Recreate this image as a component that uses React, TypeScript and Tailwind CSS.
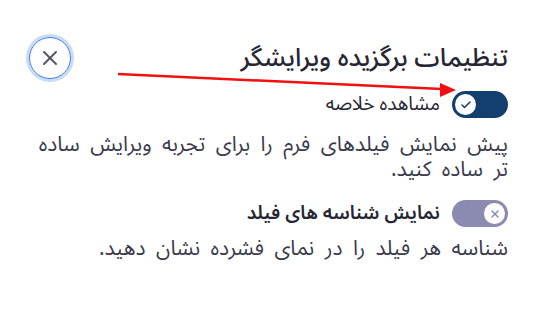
import { Check, X } from "lucide-react";

function Toggle({ on }: { on: boolean }) {
  return (
    <div
      className={
        on
          ? "flex h-[27px] w-[56px] shrink-0 items-center justify-end rounded-full bg-[#133f6e] px-[3px]"
          : "flex h-[27px] w-[56px] shrink-0 items-center justify-start rounded-full bg-[#8b8bb2] px-[3px]"
      }
    >
      <div className="flex h-[21px] w-[21px] items-center justify-center rounded-full bg-white">
        {on ? (
          <Check className="h-3 w-3 text-[#133f6e]" strokeWidth={3} />
        ) : (
          <X className="h-3 w-3 text-[#8b8bb2]" strokeWidth={3} />
        )}
      </div>
    </div>
  );
}

export default function App() {
  return (
    <div
      dir="rtl"
      className="relative h-[314px] w-[543px] overflow-hidden bg-white pl-[26px] pr-[35px] pt-[34px] text-[#2b2b3a]"
      style={{ fontFamily: '"Noto Sans Arabic", "DejaVu Sans", sans-serif' }}
    >
      {/* Header */}
      <div className="flex items-center justify-between">
        <h1 className="text-[25.5px] leading-[40px] font-medium text-[#262633]">
          تنظیمات برگزیده ویرایشگر
        </h1>
        <button className="flex h-[48px] w-[48px] items-center justify-center rounded-full border-[3px] border-[#c9dcf1] bg-white">
          <span className="flex h-full w-full items-center justify-center rounded-full border border-[#3b7cf5]">
            <X className="h-6 w-6 text-[#55556a]" strokeWidth={2} />
          </span>
        </button>
      </div>

      {/* Compact view */}
      <div className="mt-[9px] flex h-[27px] items-center gap-[12px]">
        <Toggle on={true} />
        <span className="text-[19px] leading-[27px] text-[#262633]">
          مشاهده خلاصه
        </span>
      </div>
      <p className="mt-[14px] text-[21px] leading-[25px] text-[#3a3a4c] [word-spacing:5px]">
        پیش نمایش فیلدهای فرم را برای تجربه ویرایش ساده تر ساده کنید.
      </p>

      {/* Field ids */}
      <div className="mt-[18px] flex h-[27px] items-center gap-[12px]">
        <Toggle on={false} />
        <span className="text-[19px] leading-[27px] font-semibold text-[#262633]">
          نمایش شناسه های فیلد
        </span>
      </div>
      <p className="mt-[9px] text-[21px] leading-[25px] text-[#3a3a4c] [word-spacing:5px]">
        شناسه هر فیلد را در نمای فشرده نشان دهید.
      </p>

      {/* Annotation arrow */}
      <svg
        className="pointer-events-none absolute left-0 top-0"
        width="543"
        height="314"
        viewBox="0 0 543 314"
      >
        <line x1="118" y1="74" x2="442" y2="89" stroke="#f01010" strokeWidth="2.5" />
        <polygon points="456,90 440,83 440,97" fill="#f01010" />
      </svg>
    </div>
  );
}
